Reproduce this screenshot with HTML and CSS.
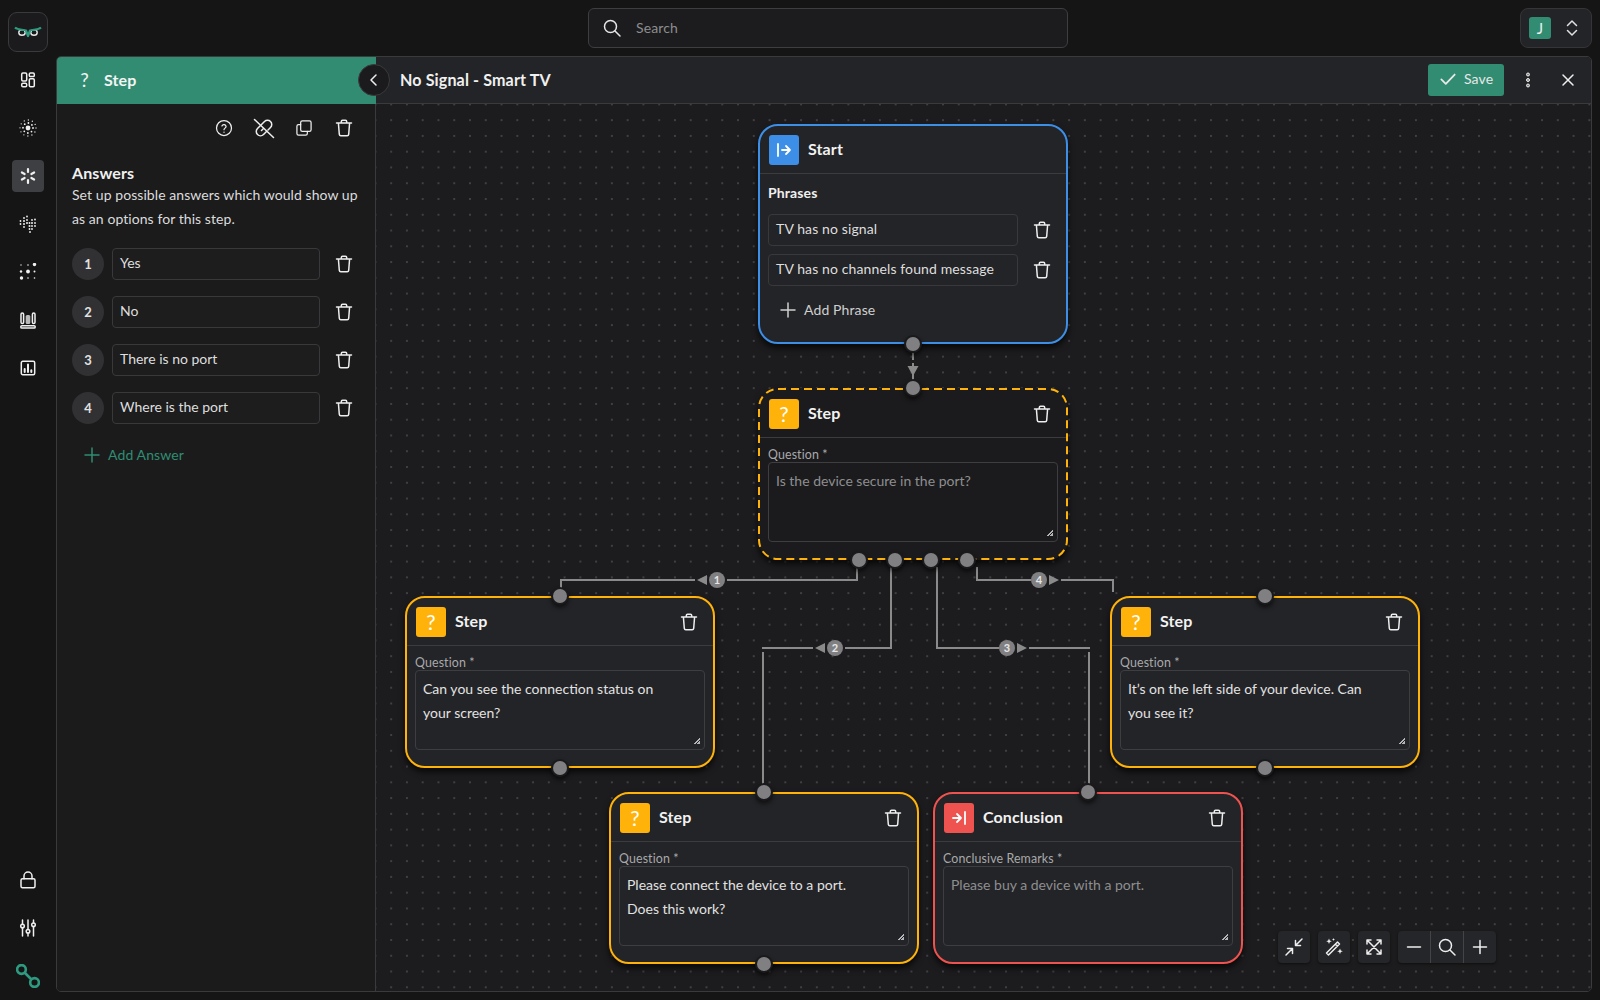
FILE: index.html
```html
<!DOCTYPE html>
<html lang="en">
<head>
<meta charset="utf-8">
<title>No Signal - Smart TV</title>
<link rel="stylesheet" href="styles.css">
</head>
<body>
<svg class="sprite" aria-hidden="true">
  <symbol id="trash" viewBox="0 0 20 20"><path d="M2.5 5h15M7.3 5V3.5c0-.7.5-1.2 1.2-1.2h3c.7 0 1.2.5 1.2 1.2V5M4.4 5l.9 11.3c.1.8.7 1.4 1.5 1.4h6.4c.8 0 1.4-.6 1.5-1.4L15.6 5"/></symbol>
  <symbol id="plus" viewBox="0 0 16 16"><path d="M8 1v14M1 8h14"/></symbol>
</svg>
<div class="app">
  <nav class="rail">
    <div class="logo">
      <svg class="logo-mark" viewBox="14 25 28 14">
        <ellipse class="eye" cx="22" cy="32.500" rx="3.200" ry="2.800"/>
        <ellipse class="eye" cx="34" cy="32.500" rx="3.200" ry="2.800"/>
        <path class="brow" d="M15 27.500C18 30.200 23 29.300 26 30.500L28 36 30 30.500C33 29.300 38 30.200 41 27.500"/>
      </svg>
    </div>
    <a class="rail-item"><svg class="ic" viewBox="0 0 18 18"><rect x="2.700" y="2" width="5" height="8" rx="1.200"/><rect x="2.700" y="12.200" width="5" height="3.600" rx="1.200"/><rect x="10.300" y="2" width="5" height="3.600" rx="1.200"/><rect x="10.300" y="7.800" width="5" height="8" rx="1.200"/></svg></a>
    <a class="rail-item"><svg class="ic dots" viewBox="0 0 18 18"><circle class="dot-fill" cx="9" cy="9" r="2.400"/><circle class="ring-a" cx="9" cy="9" r="5"/><circle class="ring-b" cx="9" cy="9" r="8"/></svg></a>
    <a class="rail-item active"><svg class="ic thick" viewBox="0 0 18 18"><path d="M9 2v3M9 13v3M2.900 5.500l2.700 1.500M12.400 11l2.700 1.500M2.900 12.500l2.700-1.500M12.400 7l2.700-1.500"/></svg></a>
    <a class="rail-item"><svg class="ic-fill" viewBox="0 0 18 18"><circle cx="5" cy="3" r=".9"/><circle cx="8" cy="1.500" r=".9"/><circle cx="1.500" cy="6" r=".9"/><circle cx="5" cy="6" r="1"/><circle cx="8" cy="5" r=".9"/><circle cx="13" cy="5" r=".9"/><circle cx="16" cy="4.500" r=".9"/><circle cx="1.500" cy="9" r=".9"/><circle cx="5" cy="9" r="1"/><circle cx="8" cy="8" r="1"/><circle cx="10.500" cy="8" r=".9"/><circle cx="13" cy="8" r="1"/><circle cx="16" cy="8" r=".9"/><circle cx="5" cy="12" r=".9"/><circle cx="10.500" cy="11" r="1"/><circle cx="13" cy="11" r=".9"/><circle cx="16" cy="11" r=".9"/><circle cx="10.500" cy="14" r=".9"/><circle cx="13" cy="14" r=".9"/><circle cx="11" cy="17" r=".9"/></svg></a>
    <a class="rail-item"><svg class="ic-fill" viewBox="0 0 18 18"><circle cx="2" cy="2" r=".7"/><circle cx="9" cy="2" r=".8"/><circle cx="15.500" cy="1.500" r="1.700"/><circle cx="2" cy="8.500" r="1.200"/><circle cx="9" cy="8.500" r="1.900"/><circle cx="15.500" cy="8.500" r="1"/><circle cx="2.500" cy="15" r="1.700"/><circle cx="9" cy="15" r=".8"/><circle cx="15.500" cy="15" r=".8"/></svg></a>
    <a class="rail-item"><svg class="ic" viewBox="0 0 18 18"><rect x="2" y="2" width="2.600" height="10.500" rx="1.300"/><rect x="13.400" y="2" width="2.600" height="10.500" rx="1.300"/><rect class="solid" x="6.700" y="4" width="4.600" height="9" rx="1.500"/><rect x="1.800" y="14.700" width="14.400" height="2.300" rx="1.100"/></svg></a>
    <a class="rail-item"><svg class="ic" viewBox="0 0 18 18"><rect x="2.300" y="2.300" width="13.400" height="13.400" rx="1.500"/><path class="thin" d="M5.700 13v-3M9 13V5.500M12.300 13v-1.800"/></svg></a>
    <a class="rail-item push"><svg class="ic" viewBox="0 0 18 18"><rect x="2" y="7.800" width="14" height="9" rx="1.500"/><path d="M5 7.800V5a4 4 0 0 1 8 0v2.800"/></svg></a>
    <a class="rail-item"><svg class="ic" viewBox="0 0 18 18"><path d="M3.500 1v4.500M3.500 9v8M9 1v9.500M9 14v3M14.500 1v3M14.500 7.500V17"/><circle cx="3.500" cy="7" r="1.800"/><circle cx="9" cy="12.200" r="1.800"/><circle cx="14.500" cy="5.800" r="1.800"/></svg></a>
    <a class="rail-item brand"><svg class="ic-brand" viewBox="0 0 22 22"><circle cx="5" cy="5" r="4"/><circle cx="17" cy="17" r="4"/><path d="M8 8l6 6"/></svg></a>
  </nav>

  <div class="workspace">
    <header class="topbar">
      <span></span>
      <div class="search">
        <svg class="ic search-ic" viewBox="0 0 20 20"><circle cx="8.500" cy="8.500" r="6"/><path d="M13 13l5 5"/></svg>
        <span>Search</span>
      </div>
      <div class="account">
        <span class="avatar">J</span>
        <svg class="ic chev" viewBox="0 0 14 18"><path d="M2.500 6.500 7 2l4.500 4.500M2.500 11.500 7 16l4.500-4.500"/></svg>
      </div>
    </header>

    <main class="panel">
      <aside class="side">
        <div class="side-head"><span class="side-q">?</span><span>Step</span></div>
        <div class="side-tools">
          <svg class="ic tool" viewBox="0 0 24 24"><circle cx="12" cy="12" r="9"/><path d="M9.500 9.500a2.600 2.600 0 0 1 5 .8c0 1.700-2.500 2-2.500 3.700"/><path d="M12 16.800v.4"/></svg>
          <svg class="ic tool tool-wide" viewBox="1 1 22 22"><path d="M9.500 8.500l3-3a4.200 4.200 0 0 1 6 6l-2.500 2.500M14.500 15.500l-3 3a4.200 4.200 0 0 1-6-6L8 10M9.500 14.500l1.500-1.500M2.500 3.500l19 18"/></svg>
          <svg class="ic tool" viewBox="0 0 24 24"><rect x="8" y="3.500" width="12.500" height="12.500" rx="2"/><path d="M8 8H5.500a2 2 0 0 0-2 2v8.500a2 2 0 0 0 2 2H14a2 2 0 0 0 2-2V16"/></svg>
          <svg class="ic tool"><use href="#trash"/></svg>
        </div>
        <h2 class="side-title">Answers</h2>
        <p class="side-desc">Set up possible answers which would show up as an options for this step.</p>
        <div class="answers">
          <div class="answer"><span class="num">1</span><div class="field">Yes</div><svg class="ic trash"><use href="#trash"/></svg></div>
          <div class="answer"><span class="num">2</span><div class="field">No</div><svg class="ic trash"><use href="#trash"/></svg></div>
          <div class="answer"><span class="num">3</span><div class="field">There is no port</div><svg class="ic trash"><use href="#trash"/></svg></div>
          <div class="answer"><span class="num">4</span><div class="field">Where is the port</div><svg class="ic trash"><use href="#trash"/></svg></div>
        </div>
        <div class="add add-green"><svg class="ic plus"><use href="#plus"/></svg><span>Add Answer</span></div>
      </aside>

      <section class="editor">
        <header class="editor-head">
          <h1 class="editor-title">No Signal - Smart TV</h1>
          <button class="save"><svg class="ic save-ic" viewBox="0 0 18 18"><path d="M1.500 9.500 6.500 14.500 16.500 4"/></svg><span>Save</span></button>
          <svg class="ic-fill more" viewBox="0 0 6 16"><circle class="hollow" cx="3" cy="2.500" r="1.500"/><circle class="hollow" cx="3" cy="8" r="1.500"/><circle class="hollow" cx="3" cy="13.500" r="1.500"/></svg>
          <svg class="ic close" viewBox="0 0 14 14"><path d="M2 2l10 10M12 2 2 12"/></svg>
        </header>
        <div class="canvas">
          <svg class="edges" viewBox="376 104 1215 887">
            <path class="edge dashed" d="M913 353v28"/>
            <path class="arrow" d="M907.500 366h11L913 376z"/>
            <path class="edge" d="M857 567v13H727M695 580H561v9"/>
            <path class="arrow" d="M707 575v10l-10-5z"/>
            <circle class="badge" cx="717" cy="580" r="8"/><text class="badge-t" x="717" y="584">1</text>
            <path class="edge" d="M891 567v81H845M813 648H762M763 652v138"/>
            <path class="arrow" d="M825 643v10l-10-5z"/>
            <circle class="badge" cx="835" cy="648" r="8"/><text class="badge-t" x="835" y="652">2</text>
            <path class="edge" d="M937 567v81H999M1029 648H1090M1089 652v138"/>
            <path class="arrow" d="M1017 643v10l10-5z"/>
            <circle class="badge" cx="1007" cy="648" r="8"/><text class="badge-t" x="1007" y="652">3</text>
            <path class="edge" d="M977 567v13h54M1061 580h52v12"/>
            <path class="arrow" d="M1049 575v10l10-5z"/>
            <circle class="badge" cx="1039" cy="580" r="8"/><text class="badge-t" x="1039" y="584">4</text>
          </svg>

          <article class="node node-start">
            <div class="node-head"><span class="badge-ic blue"><svg class="ic flow" viewBox="0 0 18 18"><path d="M3 3v12M7 9h8M11 5l4 4-4 4"/></svg></span><span class="node-title">Start</span></div>
            <div class="node-body">
              <div class="phrases-t">Phrases</div>
              <div class="phrase"><div class="field field-node">TV has no signal</div><svg class="ic trash"><use href="#trash"/></svg></div>
              <div class="phrase"><div class="field field-node">TV has no channels found message</div><svg class="ic trash"><use href="#trash"/></svg></div>
              <div class="add"><svg class="ic plus"><use href="#plus"/></svg><span>Add Phrase</span></div>
            </div>
            <i class="port port-b"></i>
          </article>

          <article class="node node-sel">
            <svg class="dash" viewBox="0 0 310 172"><rect x="1" y="1" width="308" height="170" rx="19"/></svg>
            <div class="node-head"><span class="badge-ic amber">?</span><span class="node-title">Step</span><svg class="ic trash head-trash"><use href="#trash"/></svg></div>
            <div class="node-body">
              <label class="lab">Question *</label>
              <div class="area muted">Is the device secure in the port?<i class="grip"></i></div>
            </div>
            <i class="port port-t"></i><i class="port port-s1"></i><i class="port port-s2"></i><i class="port port-s3"></i><i class="port port-s4"></i>
          </article>

          <article class="node amber-line node-a">
            <div class="node-head"><span class="badge-ic amber">?</span><span class="node-title">Step</span><svg class="ic trash head-trash"><use href="#trash"/></svg></div>
            <div class="node-body">
              <label class="lab">Question *</label>
              <div class="area">Can you see the connection status on your screen?<i class="grip"></i></div>
            </div>
            <i class="port port-t"></i><i class="port port-b"></i>
          </article>

          <article class="node amber-line node-d">
            <div class="node-head"><span class="badge-ic amber">?</span><span class="node-title">Step</span><svg class="ic trash head-trash"><use href="#trash"/></svg></div>
            <div class="node-body">
              <label class="lab">Question *</label>
              <div class="area">It’s on the left side of your device. Can you see it?<i class="grip"></i></div>
            </div>
            <i class="port port-t"></i><i class="port port-b"></i>
          </article>

          <article class="node amber-line node-b">
            <div class="node-head"><span class="badge-ic amber">?</span><span class="node-title">Step</span><svg class="ic trash head-trash"><use href="#trash"/></svg></div>
            <div class="node-body">
              <label class="lab">Question *</label>
              <div class="area">Please connect the device to a port.<br>Does this work?<i class="grip"></i></div>
            </div>
            <i class="port port-t"></i><i class="port port-b"></i>
          </article>

          <article class="node red-line node-c">
            <div class="node-head"><span class="badge-ic red"><svg class="ic flow" viewBox="0 0 18 18"><path d="M3 9h8M7 5l4 4-4 4M15 3v12"/></svg></span><span class="node-title">Conclusion</span><svg class="ic trash head-trash"><use href="#trash"/></svg></div>
            <div class="node-body">
              <label class="lab">Conclusive Remarks *</label>
              <div class="area muted">Please buy a device with a port.<i class="grip"></i></div>
            </div>
            <i class="port port-t"></i>
          </article>

          <div class="controls">
            <span class="ctl"><svg class="ic ctl-ic" viewBox="0 0 20 20"><path d="M18 2l-6.500 6.500M11.500 3.500v5h5M2 18l6.500-6.500M3.500 11.500h5v5"/></svg></span>
            <span class="ctl"><svg class="ic ctl-ic" viewBox="0 0 20 20"><path d="M2.500 16l11-11 2 2-11 11zM11.500 7l2 2"/><path class="solid-star" d="M5 1.500l.8 2 2 .8-2 .8-.8 2-.8-2-2-.8 2-.8zM16 11.500l.8 2 2 .8-2 .8-.8 2-.8-2-2-.8 2-.8zM9.500 1l.4 1.100 1.100.4-1.100.4-.4 1.100-.4-1.100L8 2.500l1.100-.4z"/></svg></span>
            <span class="ctl"><svg class="ic ctl-ic" viewBox="0 0 20 20"><path d="M7 3H3v4M13 3h4v4M7 17H3v-4M13 17h4v-4M3 3l14 14M17 3 3 17"/></svg></span>
            <div class="ctl-group">
              <span class="ctl"><svg class="ic ctl-ic" viewBox="0 0 20 20"><path d="M3.500 10h13"/></svg></span>
              <span class="ctl"><svg class="ic ctl-ic" viewBox="0 0 20 20"><circle cx="8.500" cy="8.500" r="6"/><path d="M13 13l5 5"/></svg></span>
              <span class="ctl"><svg class="ic ctl-ic" viewBox="0 0 20 20"><path d="M10 3.500v13M3.500 10h13"/></svg></span>
            </div>
          </div>
        </div>
      </section>
      <button class="collapse"><svg class="ic" viewBox="0 0 14 14"><path d="M9 2 4 7l5 5"/></svg></button>
    </main>
  </div>
</div>
</body>
</html>
```
FILE: styles.css
```css
* { box-sizing: border-box; }
html, body { margin: 0; height: 100%; }
body {
  width: 1600px;
  height: 1000px;
  overflow: hidden;
  background: #151516;
  color: #e6e6e6;
  font: 14px/24px Lato, "Liberation Sans", sans-serif;
  letter-spacing: .12px;
}
.sprite { position: absolute; width: 0; height: 0; }
.ic { fill: none; stroke: currentColor; stroke-width: 1.5; stroke-linecap: round; stroke-linejoin: round; display: block; flex: none; }
.ic-fill { fill: #f0f0f0; display: block; flex: none; }

.app { display: flex; height: 1000px; }

/* rail */
.rail { width: 56px; flex: none; display: flex; flex-direction: column; align-items: center; gap: 16px; padding: 12px 0 8px; }
.logo { width: 40px; height: 40px; margin-bottom: -4px; border: 1px solid #3a3a3c; border-radius: 9px; background: #1b1b1d; display: flex; align-items: center; justify-content: center; }
.logo-mark { width: 28px; height: 14px; }
.eye { fill: none; stroke: #e8e8e8; stroke-width: 1.4; }
.brow { fill: none; stroke: #2e9a80; stroke-width: 2.2; stroke-linejoin: round; }
.rail-item { width: 32px; height: 32px; border-radius: 4px; display: flex; align-items: center; justify-content: center; color: #f0f0f0; }
.rail-item svg { width: 18px; height: 18px; }
.rail-item.active { background: #3e3f42; }
.rail-item.push { margin-top: auto; }
.thick { stroke-width: 2.2; }
.ring-a { fill: none; stroke: #f0f0f0; stroke-width: 1.8; stroke-dasharray: 0 3.9; }
.ring-b { fill: none; stroke: #f0f0f0; stroke-width: 1.3; stroke-dasharray: 0 4.2; }
.dot-fill { fill: #f0f0f0; stroke: none; }
.solid { fill: #b9b9b9; stroke: none; }
.thin { stroke-width: 2; }
.rail-item .ic-brand { width: 24px; height: 24px; }
.ic-brand { fill: none; stroke: #2e9a80; stroke-width: 2.4; stroke-linecap: round; display: block; }

/* top */
.workspace { flex: 1; min-width: 0; display: flex; flex-direction: column; }
.topbar { height: 56px; flex: none; display: grid; grid-template-columns: 1fr 480px 1fr; padding: 8px; }
.search { height: 40px; border: 1px solid #3e3e40; border-radius: 6px; background: #1c1c1e; display: flex; align-items: center; gap: 14px; padding: 0 0 1px 13px; color: #8d8d8f; }
.search-ic { width: 20px; height: 20px; color: #e6e6e6; }
.account { justify-self: end; width: 72px; height: 40px; border: 1px solid #353537; border-radius: 8px; background: #232427; display: flex; align-items: center; padding-left: 8px; gap: 14px; }
.avatar { width: 22px; height: 22px; border-radius: 3px; background: #318c72; color: #f0f0f0; font-size: 15px; text-align: center; line-height: 22px; }
.chev { width: 14px; height: 18px; color: #e0e0e0; }

/* panel */
.panel { position: relative; height: 936px; width: 1536px; border: 1px solid #3a3a3c; border-radius: 5px; display: flex; overflow: hidden; }
.collapse { position: absolute; left: 301px; top: 7px; width: 32px; height: 32px; padding: 8px; border-radius: 50%; background: #1b1b1d; border: 1px solid #3a3a3c; color: #eee; }
.collapse svg { width: 14px; height: 14px; }

.side { width: 319px; flex: none; background: #1b1b1c; border-right: 1px solid #3a3a3c; }
.side-head { height: 47px; background: #318c72; display: flex; align-items: center; font-weight: 700; font-size: 16px; color: #f4f4f4; padding: 0 0 1px 22px; gap: 14px; margin-right: -1px; }
.side-q { font-size: 19px; font-weight: 400; width: 11px; text-align: center; }
.side-tools { display: flex; justify-content: flex-end; align-items: center; gap: 16px; padding: 12px 19px 0 0; height: 35px; }
.tool { width: 24px; height: 24px; padding: 2px; color: #eee; }
.tool-wide { padding: 1px; }
.side-title { margin: 22px 0 0 15px; font-size: 16px; line-height: 24px; font-weight: 700; color: #f0f0f0; }
.side-desc { margin: -2px 15px 0; color: #dcdcdc; width: 290px; letter-spacing: .07px; }
.answers { margin: 17px 0 0 15px; display: flex; flex-direction: column; gap: 16px; }
.answer { display: flex; align-items: center; gap: 8px; }
.num { width: 32px; height: 32px; border-radius: 50%; background: #313133; text-align: center; font-size: 13px; font-weight: 700; line-height: 32px; color: #e2e2e2; }
.field { width: 208px; height: 32px; border: 1px solid #39393b; border-radius: 4px; padding-left: 7px; line-height: 28px; background: #1d1d1e; color: #dedede; white-space: nowrap; letter-spacing: 0; }
.trash { width: 20px; height: 20px; color: #eee; margin-left: 6px; }
.add { display: flex; align-items: center; height: 32px; gap: 8px; margin: 8px 0 0 12px; color: #cfcfcf; line-height: 30px; }
.add-green { margin: 15px 0 0 27px; color: #2f8d72; }
.plus { width: 16px; height: 16px; }

/* editor */
.editor { flex: 1; min-width: 0; display: flex; flex-direction: column; }
.editor-head { height: 47px; flex: none; background: #232427; border-bottom: 1px solid #3a3a3c; display: flex; align-items: center; padding: 0 16px 0 24px; }
.editor-title { margin: 0 auto 0 0; font-size: 16.1px; line-height: 26px; font-weight: 700; color: #f0f0f0; }
.save { width: 76px; height: 32px; border: 0; border-radius: 3px; background: #318c72; color: #e8e8e8; font: 14px/24px Lato, sans-serif; letter-spacing: .12px; display: flex; align-items: center; gap: 8px; padding: 0 0 2px 12px; }
.save-ic { width: 16px; height: 16px; stroke-width: 2; }
.more { width: 6px; height: 16px; margin: 0 30px 0 21px; }
.hollow { fill: #888; stroke: #eee; stroke-width: 1; }
.close { width: 14px; height: 14px; color: #eee; }

.canvas {
  position: relative;
  flex: 1;
  background-color: #1c1c1e;
  background-image: radial-gradient(circle at 1px 1px, #3f3f44 1px, transparent 1.2px);
  background-size: 15.78px 15.78px;
  background-position: 14.2px -.6px;
}
.edges { position: absolute; inset: 0; width: 1215px; height: 887px; }
.edge { fill: none; stroke: #8a8a8a; stroke-width: 2; }
.edge.dashed { stroke-dasharray: 7 3; }
.arrow { fill: #8a8a8a; }
.badge { fill: #808082; }
.badge-t { fill: #e6e6e6; font: 700 11px Lato, sans-serif; text-anchor: middle; }

/* nodes */
.node { position: absolute; width: 310px; height: 172px; border: 2px solid; border-radius: 20px; background: #232427; box-shadow: 0 4px 6px rgba(0,0,0,.7); }
.node-start { left: 382px; top: 20px; height: 220px; border-color: #3d8ee6; }
.node-sel { left: 382px; top: 284px; border-color: transparent; background: #1b1b1d; }
.node-a { left: 29px; top: 492px; }
.node-d { left: 734px; top: 492px; }
.node-b { left: 233px; top: 688px; }
.node-c { left: 557px; top: 688px; }
.amber-line { border-color: #ffb30a; }
.red-line { border-color: #ef5350; }
.dash { position: absolute; left: -2px; top: -2px; width: 310px; height: 172px; fill: none; stroke: #ffb30a; stroke-width: 2; stroke-dasharray: 8 5; }
.node-head { height: 48px; display: flex; align-items: center; gap: 9px; padding: 1px 14px 0 9px; border-bottom: 1px solid #3c3c3f; }
.node-title { font-size: 16px; font-weight: 700; color: #f2f2f2; margin-bottom: 2px; }
.head-trash { margin-left: auto; }
.badge-ic { width: 30px; height: 30px; border-radius: 3px; color: #fff; font-size: 21px; text-align: center; line-height: 30px; display: flex; align-items: center; justify-content: center; }
.blue { background: #3d8ee6; }
.amber { background: #ffb30a; }
.red { background: #ef5350; }
.flow { width: 18px; height: 18px; stroke-width: 1.8; }
.node-body { padding: 8px 8px 0; }
.phrases-t { font-size: 14px; font-weight: 700; color: #f0f0f0; margin-bottom: 8px; line-height: 22px; height: 24px; }
.phrase { display: flex; align-items: center; gap: 8px; margin-bottom: 8px; }
.field-node { width: 250px; background: transparent; letter-spacing: .12px; }
.node-start .add { margin: 8px 0 0 12px; }
.lab { display: block; height: 16px; font-size: 12.4px; line-height: 17px; color: #a9a9ab; }
.area { position: relative; height: 80px; border: 1px solid #3e3e41; border-radius: 4px; padding: 6px 24px 0 7px; color: #e2e2e2; letter-spacing: 0; }
.area.muted { color: #8e8e90; }
.grip { position: absolute; right: 4px; bottom: 5px; width: 6px; height: 6px; background: linear-gradient(135deg, transparent 45%, #b5b5b5 45%, #b5b5b5 60%, transparent 60%, transparent 72%, #b5b5b5 72%); }

.port { position: absolute; width: 14px; height: 14px; border-radius: 50%; background: #808082; box-shadow: 0 0 0 2px #1a1a1c, 0 3px 4px 2px rgba(0,0,0,.55); z-index: 2; }
.port-t { left: 146px; top: -9px; }
.port-b { left: 146px; bottom: -9px; }
.port-s1 { left: 92px; bottom: -9px; }
.port-s2 { left: 128px; bottom: -9px; }
.port-s3 { left: 164px; bottom: -9px; }
.port-s4 { left: 200px; bottom: -9px; }

/* controls */
.controls { position: absolute; right: 95px; bottom: 28px; display: flex; gap: 8px; }
.ctl { width: 32px; height: 32px; border-radius: 4px; background: #252629; display: flex; align-items: center; justify-content: center; box-shadow: 0 1px 3px rgba(0,0,0,.5); color: #eee; }
.ctl-ic { width: 20px; height: 20px; }
.solid-star { fill: #eee; stroke: none; }
.ctl-group { display: flex; width: 98px; height: 32px; border-radius: 4px; background: #252629; box-shadow: 0 1px 3px rgba(0,0,0,.5); }
.ctl-group .ctl { flex: 1; width: auto; box-shadow: none; background: transparent; border-radius: 0; }
.ctl-group .ctl + .ctl { border-left: 1px solid #444; }
```
